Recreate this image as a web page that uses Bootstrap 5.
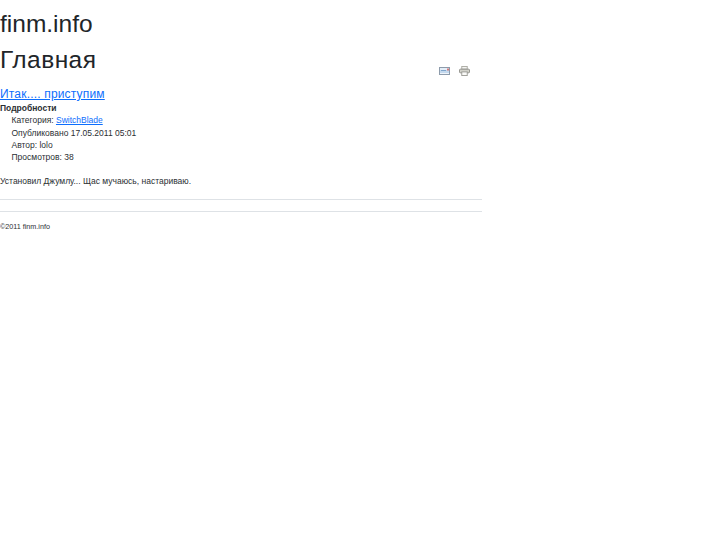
<!DOCTYPE html>
<html lang="ru"><head><meta charset="utf-8">
<link href="https://cdn.jsdelivr.net/npm/bootstrap@5.3.0/dist/css/bootstrap.min.css" rel="stylesheet">
<style>
body{font-family:"Liberation Sans",Arial,sans-serif;font-size:8.5px;line-height:12.3px;color:#2b2f33;background:#fff}
.pagebox{width:482px}
.site-title{font-size:24.5px;line-height:30px;margin:9px 0 0;font-weight:400;color:#212529}
.head-row{height:41px}
.page-title{font-size:24.5px;line-height:30px;margin:6px 0 0;font-weight:400;letter-spacing:.45px;color:#212529}
.icon-set{gap:9px;margin:22px 12px 0 0}
.art-title{font-size:12px;line-height:16px;margin:6px 0 0;font-weight:400;letter-spacing:.18px}
.art-title a{color:#0d6efd}
.info-head{font-weight:700;margin-top:0}
.info-list{list-style:none;margin:0;padding:0 0 0 11.5px}
.info-list a{color:#0d6efd}
.body-text{margin:11.5px 0 12px}
.rule{height:1px;background:#dee2e6;margin:0}
.gap-rule{margin-top:11px}
.foot{font-size:7.2px;margin-top:8.5px}
</style></head><body>
<div class="pagebox">
<div class="site-title">finm.info</div>
<div class="d-flex justify-content-between head-row">
<h1 class="page-title">Главная</h1>
<div class="d-flex icon-set align-items-center">
<svg width="11" height="8" viewBox="0 0 11 8" role="img" aria-label="E-mail"><rect x=".5" y=".5" width="10" height="7" fill="#c4d9ee" stroke="#8d9bab"/><rect x="1" y="1" width="9" height="2" fill="#e4eef8"/><rect x="2" y="3" width="5" height="1" fill="#7fa6cc"/><rect x="8" y="1.5" width="2" height="2" fill="#d77a7a"/><rect x="1" y="6" width="9" height="1" fill="#eef4fa"/></svg>
<svg width="11" height="10" viewBox="0 0 12 11" role="img" aria-label="Печать"><rect x="3" y=".5" width="6" height="3" fill="#f4f4f2" stroke="#a8a8a0"/><rect x=".5" y="3.5" width="11" height="4" rx="1" fill="#d2d2ca" stroke="#8a8a84"/><rect x="3" y="6.5" width="6" height="4" fill="#fbfbf9" stroke="#9a9a94"/></svg>
</div>
</div>
<h2 class="art-title"><a href="#">Итак.... приступим</a></h2>
<div class="info-head">Подробности</div>
<ul class="info-list">
<li>Категория: <a href="#">SwitchBlade</a></li>
<li>Опубликовано 17.05.2011 05:01</li>
<li>Автор: lolo</li>
<li>Просмотров: 38</li>
</ul>
<p class="body-text">Установил Джумлу... Щас мучаюсь, настариваю.</p>
<div class="rule"></div>
<div class="rule gap-rule"></div>
<div class="foot">©2011 finm.info</div>
</div>
</body></html>
